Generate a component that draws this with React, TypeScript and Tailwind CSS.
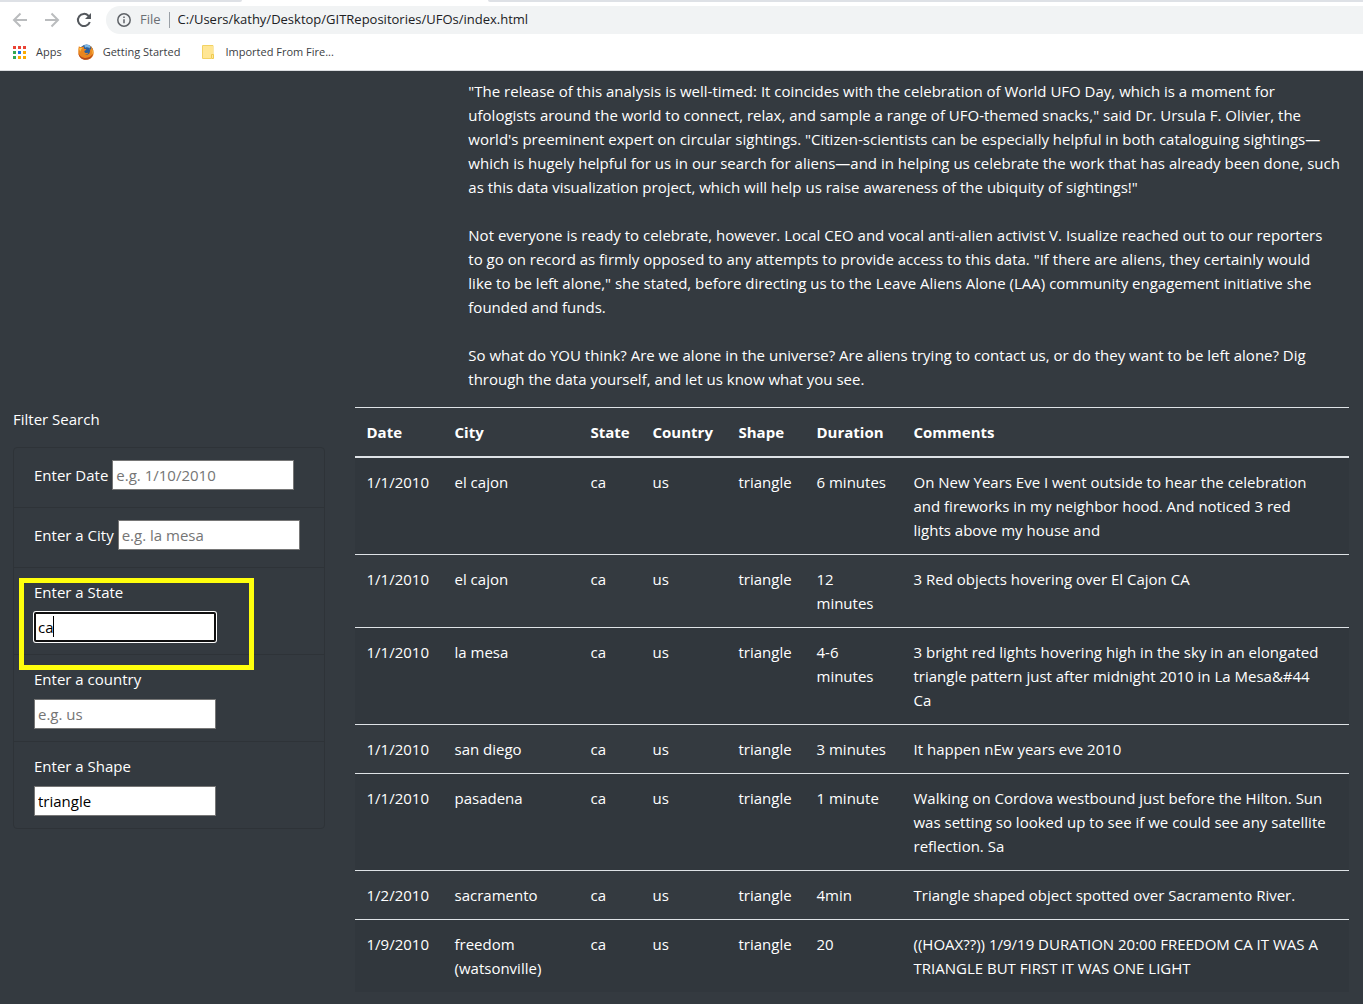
import React, { useState } from "react";

type Sighting = {
  date: string;
  city: string;
  state: string;
  country: string;
  shape: string;
  duration: string;
  comments: string;
};

const sightings: Sighting[] = [
  { date: "1/1/2010", city: "el cajon", state: "ca", country: "us", shape: "triangle", duration: "6 minutes", comments: "On New Years Eve I went outside to hear the celebration\nand fireworks in my neighbor hood. And noticed 3 red\nlights above my house and" },
  { date: "1/1/2010", city: "el cajon", state: "ca", country: "us", shape: "triangle", duration: "12 minutes", comments: "3 Red objects hovering over El Cajon CA" },
  { date: "1/1/2010", city: "la mesa", state: "ca", country: "us", shape: "triangle", duration: "4-6 minutes", comments: "3 bright red lights hovering high in the sky in an elongated\ntriangle pattern just after midnight 2010 in La Mesa&#44\nCa" },
  { date: "1/1/2010", city: "san diego", state: "ca", country: "us", shape: "triangle", duration: "3 minutes", comments: "It happen nEw years eve 2010" },
  { date: "1/1/2010", city: "pasadena", state: "ca", country: "us", shape: "triangle", duration: "1 minute", comments: "Walking on Cordova westbound just before the Hilton. Sun\nwas setting so looked up to see if we could see any satellite\nreflection. Sa" },
  { date: "1/2/2010", city: "sacramento", state: "ca", country: "us", shape: "triangle", duration: "4min", comments: "Triangle shaped object spotted over Sacramento River." },
  { date: "1/9/2010", city: "freedom (watsonville)", state: "ca", country: "us", shape: "triangle", duration: "20", comments: "((HOAX??)) 1/9/19 DURATION 20:00 FREEDOM CA IT WAS A\nTRIANGLE BUT FIRST IT WAS ONE LIGHT" },
];

const paragraphs = [
  `"The release of this analysis is well-timed: It coincides with the celebration of World UFO Day, which is a moment for
ufologists around the world to connect, relax, and sample a range of UFO-themed snacks," said Dr. Ursula F. Olivier, the
world's preeminent expert on circular sightings. "Citizen-scientists can be especially helpful in both cataloguing sightings—
which is hugely helpful for us in our search for aliens—and in helping us celebrate the work that has already been done, such
as this data visualization project, which will help us raise awareness of the ubiquity of sightings!"`,
  `Not everyone is ready to celebrate, however. Local CEO and vocal anti-alien activist V. Isualize reached out to our reporters
to go on record as firmly opposed to any attempts to provide access to this data. "If there are aliens, they certainly would
like to be left alone," she stated, before directing us to the Leave Aliens Alone (LAA) community engagement initiative she
founded and funds.`,
  `So what do YOU think? Are we alone in the universe? Are aliens trying to contact us, or do they want to be left alone? Dig
through the data yourself, and let us know what you see.`,
];

const columns = [
  { label: "Date", width: "w-[88px]" },
  { label: "City", width: "w-[136px]" },
  { label: "State", width: "w-[62px]" },
  { label: "Country", width: "w-[86px]" },
  { label: "Shape", width: "w-[78px]" },
  { label: "Duration", width: "w-[97px]" },
  { label: "Comments", width: "" },
];

function FirefoxIcon() {
  return (
    <svg width="16" height="16" viewBox="0 0 18 18" aria-hidden="true">
      <circle cx="9.500" cy="8" r="7.500" fill="#2a5f9e" />
      <path d="M7 1.500c3-1.200 5.500-.6 7.500 1.500-1 .2-1.500 1-1.300 2-1.500-1.500-3.500-1.500-5.200-.8z" fill="#7fb9e6" />
      <path d="M1 2.500C2 3.200 3 3.600 4 3.500c1-.5 2-.6 3-.2C6.200 4.200 6.500 5.200 7.800 5.600l1.600.3c-.2 1-1.300 1.300-2.100 1.800-.4 1 .1 2 1.200 2.300 1.300.3 2-.5 3.200-.2-.5 1.500-2.200 2.300-3.900 2 2.600 1.300 5.200-.3 5.600-3 .3-1.500 0-2.600-.6-3.800 1 .4 1.600 1 2 1.700.1-1.900-.5-3.400-1.600-4.800 2.800 1.600 4.500 4.300 4.500 7.600 0 4.700-3.900 8.300-8.600 8.300C4.300 17.800.4 14.200.3 9.300.2 6.800.4 4.500 1 2.500z" fill="#ea861f" />
      <path d="M.4 9.500c1 3.700 4.300 6.200 8.200 6.200 3.700 0 6.700-2 8.400-5.200-.7 4.200-3.900 7.300-8.200 7.300-4.700 0-8.300-3.500-8.400-8.300z" fill="#b5481c" />
      <path d="M1.300 4.800c1.200-.5 2.700-.5 3.900 0C3.700 5.500 2.900 6.800 3 8.600 1.800 7.500 1.300 6.200 1.300 4.800z" fill="#fac04a" />
      <path d="M15 5c1.800 2.500 2 5 .6 7.500.3-2.600.2-5-.6-7.500z" fill="#fcc54a" />
    </svg>
  );
}

const appDots = [
  "fill-[#ea4335]", "fill-[#ea4335]", "fill-[#ea4335]",
  "fill-[#34a853]", "fill-[#1a73e8]", "fill-[#fbab00]",
  "fill-[#34a853]", "fill-[#fbab00]", "fill-[#fbab00]",
];

function BrowserBar() {
  return (
    <header className="border-b border-[#dadce0] bg-white text-[#3c4043]">
      <div className="flex h-[2px]">
        <div className="w-[242px] rounded-br-sm bg-[#dee1e6]" />
        <div className="w-[246px]" />
        <div className="flex-1 rounded-bl-sm bg-[#dee1e6]" />
      </div>
      <div className="flex items-center pt-1">
        <nav aria-label="History" className="flex items-center gap-4 pr-[14px] pl-3">
          <button type="button" aria-label="Back" className="text-[#babcbe]">
            <svg width="16" height="16" viewBox="0 0 16 16" fill="none" stroke="currentColor" strokeWidth="2">
              <path d="M15 8H2.500M8.500 1.500L2 8l6.500 6.500" />
            </svg>
          </button>
          <button type="button" aria-label="Forward" className="text-[#babcbe]">
            <svg width="16" height="16" viewBox="0 0 16 16" fill="none" stroke="currentColor" strokeWidth="2">
              <path d="M1 8h12.500M7.500 1.500L14 8l-6.500 6.500" />
            </svg>
          </button>
          <button type="button" aria-label="Reload" className="text-[#54585d]">
            <svg width="16" height="16" viewBox="0 0 16 16" fill="none" stroke="currentColor" strokeWidth="2">
              <path d="M13.800 10A6.100 6.100 0 1 1 12.400 3.700L14 5.300" />
              <path d="M15 1v6H9z" fill="currentColor" stroke="none" />
            </svg>
          </button>
        </nav>
        <div className="flex h-7 flex-1 items-center rounded-l-full bg-[#f1f3f4] pl-[11px] text-[13px]">
          <svg width="14" height="14" viewBox="0 0 14 14" fill="none" stroke="#5f6368" strokeWidth="1.500" aria-hidden="true">
            <circle cx="7" cy="7" r="6.200" />
            <path d="M7 6.200v4M7 3.500v1.500" />
          </svg>
          <span className="ml-[9px] text-[#6b6f74]">File</span>
          <span className="mx-2 h-4 w-px bg-[#9aa0a6]" />
          <input aria-label="Address" defaultValue="C:/Users/kathy/Desktop/GITRepositories/UFOs/index.html" className="min-w-0 flex-1 bg-transparent text-[#202124] outline-none" />
        </div>
      </div>
      <nav aria-label="Bookmarks" className="flex h-9 items-center gap-4 pl-3 text-[11px]">
        <a href="#apps" className="flex items-center gap-[9px]">
          <svg width="15" height="15" viewBox="0 0 15 15" aria-hidden="true">
            {appDots.map((fill, i) => (
              <rect key={i} x={1 + (i % 3) * 5} y={1 + Math.floor(i / 3) * 5} width="3" height="3" className={fill} />
            ))}
          </svg>
          Apps
        </a>
        <a href="#getting-started" className="flex items-center gap-[9px]">
          <FirefoxIcon />
          Getting Started
        </a>
        <a href="#imported" className="ml-1 flex items-center gap-[9px]">
          <svg width="16" height="16" viewBox="0 0 16 16" aria-hidden="true">
            <path d="M2.500 1.500h10.500v9.500M11 14.500H2.500v-13" fill="none" stroke="#f2d263" />
            <path d="M3 2h10v9h-2v3H3z" fill="#ffe694" />
            <path d="M11.500 10.500h2v4h-2z" fill="#ffe694" stroke="#efcb50" />
          </svg>
          Imported From Fire...
        </a>
      </nav>
    </header>
  );
}

function Field({ id, label, placeholder, initial = "", stacked = false, active = false }: {
  id: string; label: string; placeholder: string; initial?: string; stacked?: boolean; active?: boolean;
}) {
  const [value, setValue] = useState(initial);
  return (
    <li className={stacked ? "flex flex-col items-start gap-2 px-5 py-3" : "flex items-center gap-1 px-5 pt-3 pb-[17px]"}>
      <label htmlFor={id} className="whitespace-nowrap">{label}</label>
      <div className="relative">
        <input
          id={id}
          value={value}
          placeholder={placeholder}
          onChange={(e) => setValue(e.target.value)}
          className={
            active
              ? "block h-[30px] w-[182px] rounded-[2px] border-2 border-[#101010] bg-white px-[2px] text-black ring-1 ring-white outline-none"
              : "block h-[30px] w-[182px] border border-[#767676] bg-white px-[3px] text-black placeholder:text-[#757575]"
          }
        />
        {active && <span className="absolute top-1 left-[19px] h-[21px] w-px bg-black" />}
      </div>
    </li>
  );
}

export default function App() {
  return (
    <div className="min-h-screen bg-[#343a40] font-['Open_Sans',sans-serif]">
      <BrowserBar />
      <main className="grid grid-cols-12 gap-x-[30px] gap-y-4 pt-2 pr-[14px] pb-3 pl-[13px] text-[15px] leading-6 text-white">
        <article className="col-span-8 col-start-5 flex flex-col gap-6">
          {paragraphs.map((text, i) => (
            <p key={i} className="whitespace-pre-line">{text}</p>
          ))}
        </article>

        <aside className="col-span-3">
          <form aria-label="Filter Search" className="relative">
            <p className="mb-4">Filter Search</p>
            <ul className="divide-y divide-[#2e3338] rounded border border-[#2e3338]">
              <Field id="date" label="Enter Date" placeholder="e.g. 1/10/2010" />
              <Field id="city" label="Enter a City" placeholder="e.g. la mesa" />
              <Field id="state" label="Enter a State" placeholder="e.g. ca" initial="ca" stacked active />
              <Field id="country" label="Enter a country" placeholder="e.g. us" stacked />
              <Field id="shape" label="Enter a Shape" placeholder="e.g. circle" initial="triangle" stacked />
            </ul>
            <div className="pointer-events-none absolute top-[171px] left-[6px] h-[92px] w-[235px] border-5 border-[#ffff0d]" />
          </form>
        </aside>

        <section className="col-span-9">
          <table className="w-full table-fixed border-separate border-spacing-0 text-left">
            <thead>
              <tr>
                {columns.map((c) => (
                  <th key={c.label} scope="col" className={`${c.width} border-t border-b-2 border-[#dee2e6] p-3 font-bold`}>{c.label}</th>
                ))}
              </tr>
            </thead>
            <tbody>
              {sightings.map((s, i) => (
                <tr key={i} className="group align-top odd:bg-[#31373d]">
                  {[s.date, s.city, s.state, s.country, s.shape, s.duration, s.comments].map((text, j) => (
                    <td key={j} className="border-t border-[#dee2e6] p-3 whitespace-pre-line group-first:border-t-0">{text}</td>
                  ))}
                </tr>
              ))}
            </tbody>
          </table>
        </section>
      </main>
    </div>
  );
}
